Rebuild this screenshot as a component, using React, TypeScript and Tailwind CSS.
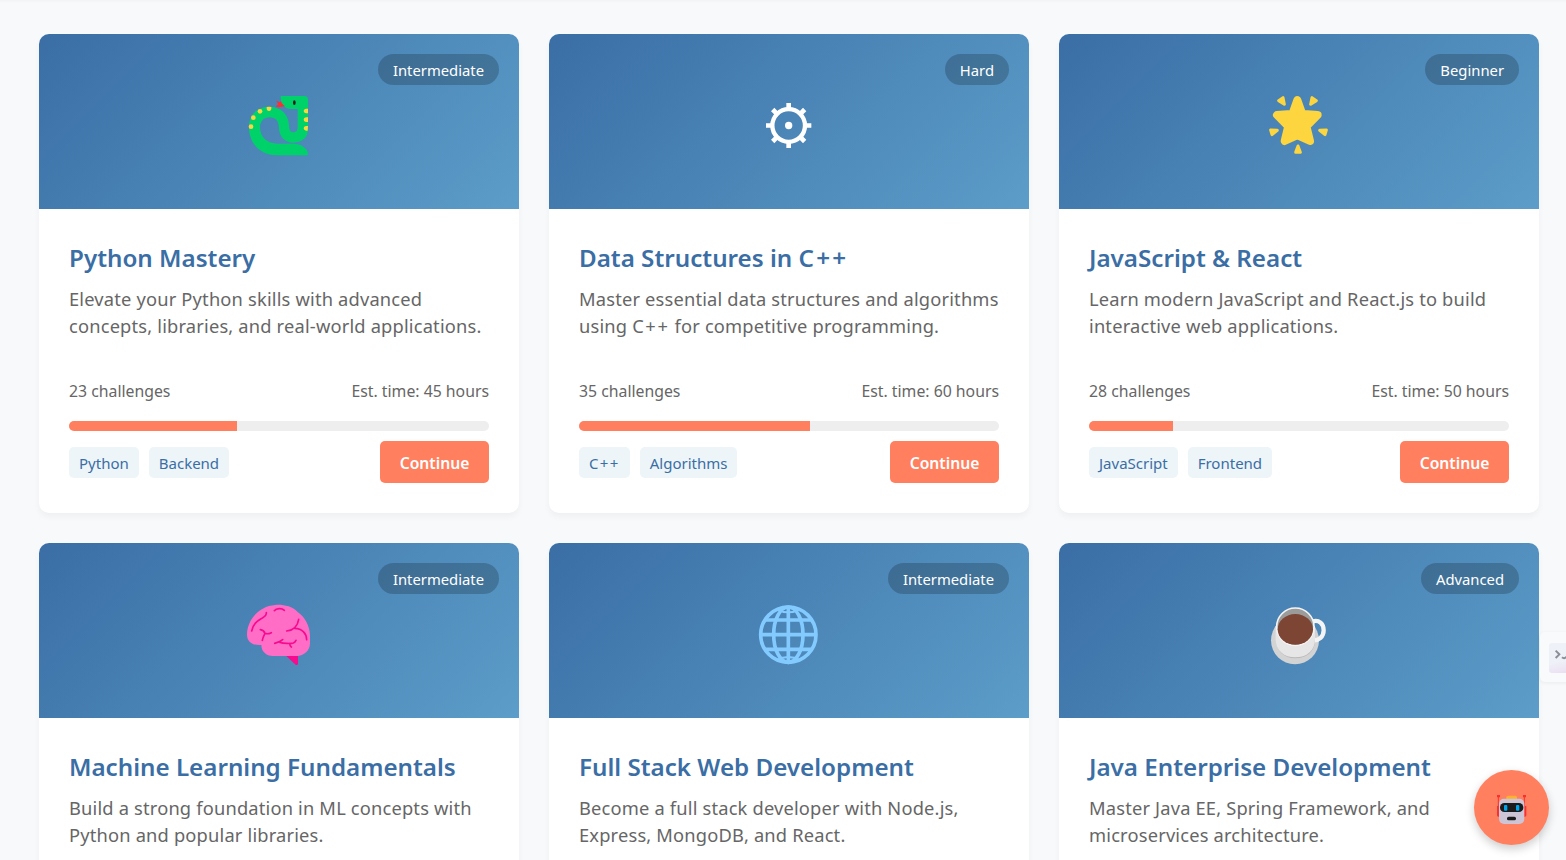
import type { ReactNode } from "react";

const Snake = () => (
  <>
    <path d="M152 48H222Q234 48 234 60V148C234 173 216 188 190 188C164 188 148 170 147 144C146 122 137 112 119 112C101 112 90 124 90 142C90 172 112 191 142 191H190C214 191 234 206 234 222Q234 226 230 226H140C91 226 57 190 57 142C57 104 82 80 117 80C153 80 176 103 177 137C178 151 181 157 190 157C199 157 203 151 203 143V87H184C164 87 152 73 152 48Z" fill="#00d26a" />
    <path d="M138 62L150 67L152 63L156 71L165 79L146 82L136 79L145 73Z" fill="#f8312f" />
    <ellipse cx="193" cy="68" rx="4" ry="7" fill="#1c1c1c" />
    <g fill="#fcd53f">
      <circle cx="63" cy="140" r="7" />
      <circle cx="70" cy="113" r="7" />
      <circle cx="90" cy="94" r="7" />
      <path d="M110 81Q117 79 124 81Q125 93 117 93Q109 93 110 81Z" />
      <path d="M234 86H228Q221 87 221 93T228 100H234ZM234 112H228Q221 113 221 119T228 126H234ZM234 138H228Q221 139 221 145T228 152H233Z" />
    </g>
  </>
);

const Gear = () => (
  <g fill="none" stroke="#fff">
    <circle cx="146" cy="136.500" r="49" strokeWidth="13" />
    <circle cx="146" cy="136.500" r="11" fill="#fff" stroke="none" />
    <path d="M146 69V86M146 187V204M78 136.500H96M196 136.500H214" strokeWidth="14" />
    <path d="M98 88.500L111 101.500M181 171.500L194 184.500M194 88.500L181 101.500M111 171.500L98 184.500" strokeWidth="14" />
  </g>
);

const Star = () => (
  <g fill="#fcd53f" stroke="#fcd53f" strokeLinejoin="round">
    <path d="M142 60L155 97Q157 101 162 102L203 105L172 136Q169 140 171 146L180 183L150 169Q142 166 134 169L104 183L113 146Q115 140 112 136L81 105L122 102Q127 101 129 97Z" strokeWidth="24" />
    <path d="M86 62L99 53L103 73ZM199 62L186 53L182 73ZM62 150L82 151L66 164ZM229 150L209 151L225 164ZM144 198L151 217H137Z" strokeWidth="9" />
  </g>
);

const Brain = () => (
  <>
    <path d="M168 197H204V222Q202 226 197 224Z" fill="#f70a8d" />
    <path d="M136 45C158 43 185 48 203 66C224 80 240 108 240 138V160C240 182 222 198 200 198H129C108 198 94 184 94 165C72 167 51 158 51 134C51 92 86 48 136 45Z" fill="#ff6dc6" />
    <g fill="none" stroke="#f70a8d" strokeWidth="5" strokeLinecap="round" strokeLinejoin="round">
      <path d="M65 123C71 95 88 91 100 82C108 77 110 73 109 68M133 62C139 54 156 54 163 61M91 119C99 120 103 125 105 130C102 136 98 143 97 151M105 130C112 133 118 131 124 128M206 88C203 107 190 121 170 123M194 115C217 115 230 132 230 149M134 160C147 156 151 155 158 149M150 157C160 160 181 162 190 159C195 157 197 154 198 151M179 160C179 166 181 169 184 171" />
    </g>
  </>
);

const Globe = () => (
  <g fill="none" stroke="#83cbff" strokeWidth="11">
    <circle cx="145" cy="134" r="83" />
    <ellipse cx="145" cy="134" rx="44" ry="83" />
    <path d="M145 51V217M62 134H228M74 90H216M74 178H216" />
    <path d="M110 58Q145 76 180 58M110 210Q145 192 180 210" strokeWidth="6" />
  </g>
);

const Coffee = () => (
  <>
    <circle cx="135" cy="151" r="72" fill="#d3d3d3" />
    <path d="M188 94C207 88 221 102 221 121C221 140 207 153 188 151" fill="none" stroke="#f4f4f4" strokeWidth="13" />
    <path d="M78 109H195V151C195 184 170 205 136 205C102 205 78 182 78 150Z" fill="#b8b8b8" />
    <path d="M77 108H195V149C195 181 170 202 136 202C102 202 77 181 77 149Z" fill="#e6e6e6" />
    <circle cx="136" cy="110" r="56" fill="#9b9b9b" stroke="#f4f4f4" strokeWidth="5" />
    <ellipse cx="136" cy="118" rx="53" ry="46" fill="#7d4533" />
  </>
);

type Course = {
  title: string;
  level: string;
  lines: [string, string];
  stats?: { challenges: number; hours: number; progress: number; tags: string[] };
  icon: ReactNode;
};

const courses: Course[] = [
  { title: "Python Mastery", level: "Intermediate", lines: ["Elevate your Python skills with advanced", "concepts, libraries, and real-world applications."], stats: { challenges: 23, hours: 45, progress: 40, tags: ["Python", "Backend"] }, icon: <Snake /> },
  { title: "Data Structures in C++", level: "Hard", lines: ["Master essential data structures and algorithms", "using C++ for competitive programming."], stats: { challenges: 35, hours: 60, progress: 55, tags: ["C++", "Algorithms"] }, icon: <Gear /> },
  { title: "JavaScript & React", level: "Beginner", lines: ["Learn modern JavaScript and React.js to build", "interactive web applications."], stats: { challenges: 28, hours: 50, progress: 20, tags: ["JavaScript", "Frontend"] }, icon: <Star /> },
  { title: "Machine Learning Fundamentals", level: "Intermediate", lines: ["Build a strong foundation in ML concepts with", "Python and popular libraries."], icon: <Brain /> },
  { title: "Full Stack Web Development", level: "Intermediate", lines: ["Become a full stack developer with Node.js,", "Express, MongoDB, and React."], icon: <Globe /> },
  { title: "Java Enterprise Development", level: "Advanced", lines: ["Master Java EE, Spring Framework, and", "microservices architecture."], icon: <Coffee /> },
];

/* Gives the plus signs of "C++" a little more room. */
function Spaced({ text }: { text: string }) {
  const [before, after] = text.split("C++");
  if (after === undefined) return <>{text}</>;
  return (
    <>
      {before}
      <span className="tracking-[0.09em]">C++</span>
      {after}
    </>
  );
}

function CourseCard({ course }: { course: Course }) {
  const { stats } = course;
  return (
    <article className="flex h-[479px] flex-col overflow-hidden rounded-[10px] bg-white shadow-[0_4px_6px_rgba(0,0,0,0.04)]">
      <div className="relative flex h-[175px] shrink-0 items-center justify-center bg-[linear-gradient(135deg,#3a6ea5,#5c9dc9)]">
        <svg className={`ml-[2px] h-[90px] w-[100px] ${stats ? "mt-[7px]" : "mt-[9px]"}`} viewBox="0 0 300 270" aria-hidden="true">
          {course.icon}
        </svg>
        <span className="absolute top-5 right-5 flex h-[31px] items-center rounded-full bg-black/20 px-[15px] pt-[2px] text-[14.800px] whitespace-nowrap text-white">
          {course.level}
        </span>
      </div>
      <div className="flex flex-1 flex-col p-[30px]">
        <h3 className="h-[46px] text-[24.200px] leading-[38px] font-semibold whitespace-nowrap text-[#3a6ea5]">
          <Spaced text={course.title} />
        </h3>
        <p className="h-[83px] text-[18.300px] leading-[27px] tracking-[0.18px] whitespace-nowrap text-[#666]">
          <Spaced text={course.lines[0]} />
          <br />
          <Spaced text={course.lines[1]} />
        </p>
        {stats && (
          <>
            <div className="flex h-[53px] justify-between pt-[10px] text-[15.800px] leading-[27px] text-[#666]">
              <span>{stats.challenges} challenges</span>
              <span>Est. time: {stats.hours} hours</span>
            </div>
            <div className="h-[10px] overflow-hidden rounded-[5px] bg-[#eee]">
              <div className="h-full bg-[#ff7f5f]" style={{ width: `${stats.progress}%` }} />
            </div>
            <div className="mt-[10px] flex items-center justify-between">
              <div className="flex gap-[10px]">
                {stats.tags.map((tag) => (
                  <span key={tag} className="flex h-[31px] items-center rounded-[5px] bg-[#edf5f9] px-[10px] pt-[2px] text-[15px] text-[#3a6ea5]">
                    <Spaced text={tag} />
                  </span>
                ))}
              </div>
              <button className="h-[42px] w-[109px] rounded-[5px] bg-[#ff7f5f] pt-[3px] text-[15.700px] font-semibold text-white">Continue</button>
            </div>
          </>
        )}
      </div>
    </article>
  );
}

export default function App() {
  return (
    <div className="relative h-[860px] w-full overflow-hidden bg-[#f8f9fb] font-['Noto_Sans',sans-serif]">
      <div className="absolute inset-x-0 top-0 h-[3px] bg-linear-to-b from-[#f2f3f5] to-[#f8f9fb]" />
      <main className="ml-[39px] grid w-[1500px] grid-cols-3 gap-[30px] pt-[34px]">
        {courses.map((course) => (
          <CourseCard key={course.title} course={course} />
        ))}
      </main>
      <aside className="absolute top-[632px] left-[1540px] h-[50px] w-[40px] rounded-[5px] bg-[#f9fafb] pt-[11px] pl-[9px] shadow-[0_1px_4px_rgba(0,0,0,0.06)]">
        <div className="h-[30px] w-[30px] rounded-[3px] bg-[linear-gradient(165deg,#eff1f8_55%,#ead9f0)]">
          <svg className="h-[30px] w-[30px]" viewBox="0 0 90 90" fill="none" stroke="#8b8e98" strokeWidth="6" aria-hidden="true">
            <path d="M20 23L31 34L20 45M39 43Q45 48 51 43L57 43" />
          </svg>
        </div>
      </aside>
      <button className="absolute top-[770px] left-[1474px] h-[75px] w-[75px] rounded-full bg-[#ff7f5f] shadow-[0_4px_10px_rgba(0,0,0,0.2)]" aria-label="Chat">
        <svg className="h-[75px] w-[75px]" viewBox="0 0 225 225" aria-hidden="true">
          <path d="M73 79V138M151 79V138" stroke="#f8312f" strokeWidth="3" />
          <path d="M69 75H78V82H69ZM147 75H156V82H147ZM69 109Q69 107 73 107H76V140H73Q69 140 69 136ZM157 109Q157 107 153 107H149V140H153Q157 140 157 136Z" fill="#f8312f" />
          <rect x="97" y="77" width="32" height="18" rx="5" fill="#ffb02e" />
          <rect x="75" y="86" width="76" height="76" rx="15" fill="#cdc4d6" />
          <rect x="78" y="99" width="70" height="27" rx="13" fill="#1c1c1c" />
          <rect x="90" y="105" width="10" height="17" rx="3" fill="#00a6ed" />
          <rect x="126" y="105" width="10" height="17" rx="3" fill="#00a6ed" />
          <rect x="99" y="140" width="27" height="11" rx="5" fill="#1c1c1c" />
        </svg>
      </button>
    </div>
  );
}
